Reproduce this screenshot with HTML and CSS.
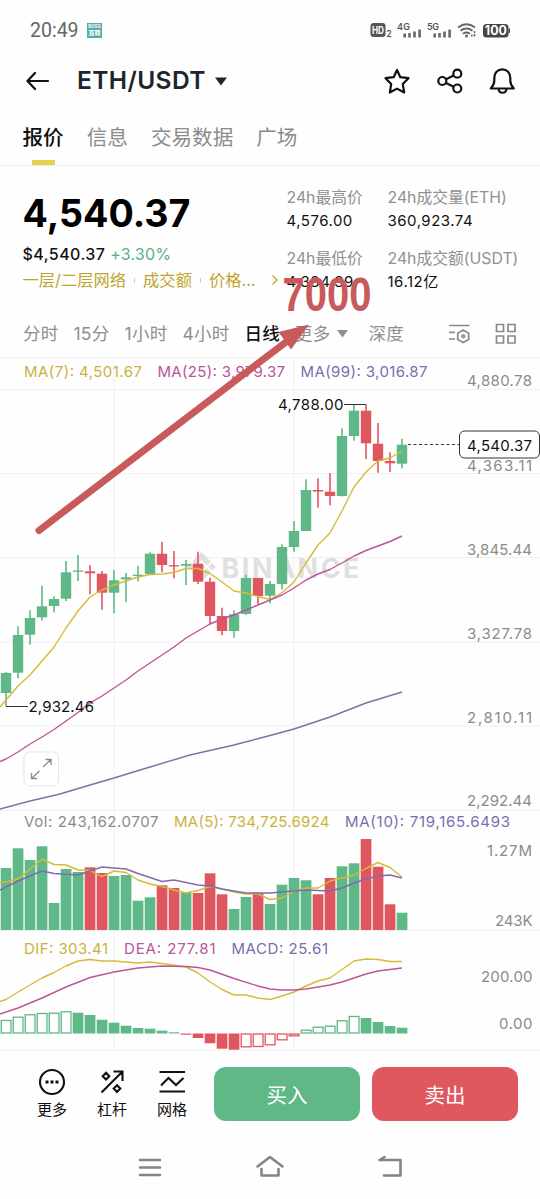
FILE: index.html
```html
<!DOCTYPE html>
<html lang="zh-CN">
<head>
    <meta charset="UTF-8">
    <meta name="viewport" content="width=device-width, initial-scale=1.0">
    <title>ETH/USDT</title>
    <link rel="stylesheet" href="styles.css">
</head>
<body>
    <div class="phone">
        <div class="status-bar">
            <span class="time">20:49</span>
            <span class="app-badge"><b>BOSS</b><b>直聘</b></span>
            <svg class="status-icons" width="144" height="24" viewBox="368 18 144 24">
                <rect x="370.5" y="23" width="15" height="14" rx="3" fill="#555"/>
                <text x="372" y="34" font-size="10.5" font-weight="700" fill="#fff" textLength="12" lengthAdjust="spacingAndGlyphs">HD</text>
                <text x="386.300" y="37" font-size="8.5" font-weight="600">2</text>
                <text x="397" y="30" font-size="9" font-weight="600" textLength="13">4G</text>
                <path d="M404.700 33.500v4M409.500 33v4.500M414.500 31.500v6M419.600 29.500v8" stroke="#666" stroke-width="2.600"/>
                <text x="427" y="30" font-size="9" font-weight="600" textLength="12">5G</text>
                <path d="M434.700 33.500v4M439.500 33v4.500M444.500 31.500v6M449.600 29.500v8" stroke="#666" stroke-width="2.600"/>
                <g fill="none" stroke="#666" stroke-width="1.900">
                    <path d="M458 27.500q8.500-6.500 17 0M460.500 30.800q6-4.500 12 0M463 33.800q3.500-2.500 7 0"/>
                    <path d="M474.500 31v2M474.500 34v2.500M471.800 34.500v2" stroke-width="1.500"/>
                </g>
                <circle cx="466.500" cy="36" r="1.500" fill="#666"/>
                <rect x="483" y="24" width="25.500" height="13.500" rx="3.500" fill="#444"/>
                <rect x="508.500" y="28.500" width="1.500" height="4.500" fill="#444"/>
                <text x="484.800" y="35.300" font-size="12.500" font-weight="700" fill="#fff" textLength="22" lengthAdjust="spacingAndGlyphs">100</text>
            </svg>
        </div>

        <div class="header">
            <svg class="back" width="24" height="22" viewBox="0 0 24 22"><path d="M9 3L1.500 11l7.500 8M1.500 11h20.500"/></svg>
            <h1>ETH/USDT</h1>
            <svg class="caret" width="14" height="9" viewBox="0 0 14 9"><path d="M1 .5h12L7 8.500z"/></svg>
            <div class="header-icons">
                <svg width="28" height="28" viewBox="0 0 28 28"><path d="M14 3l3.300 7.200 8.200 1-5.700 5.900 1.400 8.400L14 21.600l-7.200 3.900 1.400-8.400-5.700-5.900 8.200-1z"/></svg>
                <svg width="28" height="28" viewBox="0 0 28 28"><circle cx="6.300" cy="14" r="4"/><circle cx="21.300" cy="6.700" r="4"/><circle cx="21.300" cy="21.500" r="4"/><path d="M10 12.200l7.700-3.600M10 16l7.700 3.700"/></svg>
                <svg width="28" height="28" viewBox="0 0 28 28"><path d="M2.800 21.500h23c-2.200-2.200-3.500-4-3.500-8V11c0-5-3.200-8.700-8-8.700S6.300 6 6.300 11v2.500c0 4-1.300 5.800-3.500 8zM10.500 22c.5 5 7.500 5 8 0"/></svg>
            </div>
        </div>

        <div class="tabs">
            <span class="tab active">报价</span>
            <span class="tab">信息</span>
            <span class="tab">交易数据</span>
            <span class="tab">广场</span>
        </div>

        <div class="quote">
            <div class="quote-main">
                <div class="price">4,540.37</div>
                <div class="fiat">$4,540.37 <span class="change">+3.30%</span></div>
                <div class="tags">
                    <span>一层/二层网络</span><i></i><span>成交额</span><i></i><span>价格...</span>
                    <svg width="8" height="12" viewBox="0 0 8 12"><path d="M1.500 1.500L6 6l-4.500 4.500"/></svg>
                </div>
            </div>
            <div class="stats">
                <div class="stat"><label>24h最高价</label><b>4,576.00</b></div>
                <div class="stat"><label>24h成交量(ETH)</label><b>360,923.74</b></div>
                <div class="stat"><label>24h最低价</label><b>4,334.39</b></div>
                <div class="stat"><label>24h成交额(USDT)</label><b>16.12亿</b></div>
            </div>
        </div>

        <div class="periods">
            <span>分时</span>
            <span>15分</span>
            <span>1小时</span>
            <span>4小时</span>
            <span class="active">日线</span>
            <span class="more">更多 <svg width="11" height="8" viewBox="0 0 11 8"><path d="M0 0h11L5.500 7.500z"/></svg></span>
            <span class="depth">深度</span>
            <div class="period-icons">
                <svg width="24" height="22" viewBox="0 0 24 22"><path d="M2 2.500h20.500M2 9.300h6M2 16h6M16.200 7l5.500 3.200v6.200l-5.500 3.200-5.500-3.200v-6.200z"/><circle cx="16.200" cy="13.300" r="1.300"/></svg>
                <svg width="22" height="22" viewBox="0 0 22 22"><path d="M1.500 1.500h7v7h-7zM13 1.500h7v7h-7zM1.500 13h7v7h-7zM13 13h7v7h-7z"/></svg>
            </div>
        </div>

        <svg class="chart" id="main-chart" width="540" height="454" viewBox="0 357 540 454">
            <path class="grid" d="M0 357.500h540M0 389.500h540M0 473.500h540M0 557.500h540M0 642h540M0 726h540M0 810.500h540M114 357v454M294 357v454"/>
            <g class="watermark">
                <path d="M201.500 552l9.500 9.500-4 4-5.500-5.500-5.500 5.500-4-4zM191 563l3.800 3.800-3.800 3.800-3.800-3.800zM201.500 563l3.800 3.800-3.800 3.800-3.800-3.800zM212 563l3.800 3.800-3.800 3.800-3.800-3.800zM196 568l5.500 5.500 5.500-5.500 4 4-9.500 9.500-9.500-9.500z"/>
                <text x="221.500" y="578" textLength="138">BINANCE</text>
            </g>
            <g id="candles"></g>
            <g id="ma-lines"></g>
            <text class="yellow" x="24" y="377" textLength="118">MA(7): 4,501.67</text>
            <text class="pink" x="157.500" y="377" textLength="127.500">MA(25): 3,979.37</text>
            <text class="purple" x="300.500" y="377" textLength="127">MA(99): 3,016.87</text>
            <g class="axis">
                <text x="467" y="386" textLength="65">4,880.78</text>
                <text x="467" y="470.500" textLength="65">4,363.11</text>
                <text x="467" y="554.500" textLength="65">3,845.44</text>
                <text x="467" y="639" textLength="65">3,327.78</text>
                <text x="467" y="723" textLength="65">2,810.11</text>
                <text x="467" y="806" textLength="65">2,292.44</text>
            </g>
            <g class="marks">
                <path d="M344 404.500h22M6 706.500h22"/>
                <path d="M408 444.500h51" stroke-dasharray="3 2.500"/>
                <rect x="459.500" y="431" width="80" height="27" rx="5"/>
                <text x="278" y="410" textLength="65.500">4,788.00</text>
                <text x="28.500" y="712" textLength="65.500">2,932.46</text>
                <text x="467" y="451" textLength="65">4,540.37</text>
            </g>
            <g class="expand">
                <rect x="24" y="752" width="34.500" height="34" rx="6"/>
                <path d="M43 767l8-7.500M45.500 759.500H51v5.500M39.500 771l-8 7.500M37 778.500h-5.500V773"/>
            </g>
        </svg>

        <svg class="chart" id="vol-chart" width="540" height="120" viewBox="0 811 540 120">
            <path class="grid" d="M0 930.500h540M114 811v120M294 811v120"/>
            <g id="vol-bars"></g>
            <text class="gray" x="24" y="827" textLength="134.500">Vol: 243,162.0707</text>
            <text class="yellow" x="174" y="827" textLength="155.500">MA(5): 734,725.6924</text>
            <text class="purple" x="345" y="827" textLength="165">MA(10): 719,165.6493</text>
            <g class="axis">
                <text x="487" y="855.500" textLength="45">1.27M</text>
                <text x="495" y="926" textLength="37.500">243K</text>
            </g>
        </svg>

        <svg class="chart" id="macd-chart" width="540" height="120" viewBox="0 931 540 120">
            <path class="grid" d="M0 1050h540M114 931v120M294 931v120"/>
            <g id="macd-bars"></g>
            <text class="yellow" x="24" y="954" textLength="84">DIF: 303.41</text>
            <text class="pink" x="124" y="954" textLength="91.500">DEA: 277.81</text>
            <text class="purple" x="231.500" y="954" textLength="96.500">MACD: 25.61</text>
            <g class="axis">
                <text x="481" y="982" textLength="51.500">200.00</text>
                <text x="499" y="1029" textLength="33.500">0.00</text>
            </g>
        </svg>

        <div class="actions">
            <div class="action">
                <svg width="28" height="28" viewBox="0 0 28 28"><circle cx="14" cy="14" r="12"/><path d="M7.500 14h3M12.500 14h3M17.500 14h3" stroke-width="3"/></svg>
                <span>更多</span>
            </div>
            <div class="action">
                <svg width="28" height="28" viewBox="0 0 28 28"><path d="M3.500 24.500L24.500 3.500M15.500 3.500h9v9.500M8 4.800l3.300 3.400L8 11.600 4.700 8.200zM19 17.200l3.300 3.400-3.300 3.400-3.300-3.400z"/></svg>
                <span>杠杆</span>
            </div>
            <div class="action">
                <svg width="28" height="28" viewBox="0 0 28 28"><path d="M1.500 4h25.500M1.500 23.500h25.500M3 17.500l7.500-7.500 7.500 7 7.500-7"/></svg>
                <span>网格</span>
            </div>
            <button class="buy">买入</button>
            <button class="sell">卖出</button>
        </div>

        <div class="nav-bar">
            <svg width="30" height="26" viewBox="0 0 30 26"><path d="M5 5h20M5 12.500h20M5 20h20"/></svg>
            <svg width="30" height="26" viewBox="0 0 30 26"><path d="M2.500 11.500L15 2l12.500 9.500M6.500 14v6.500h17V14"/></svg>
            <svg width="30" height="26" viewBox="0 0 30 26"><path d="M9.500 2l-5 3H25.500v15.500H9"/></svg>
        </div>

        <!-- hand drawn target on top of the page -->
        <svg class="note" width="380" height="300" viewBox="20 245 380 300">
            <path d="M39 530.500L290 339" fill="none" stroke="#c95a5c" stroke-width="7" stroke-linecap="round"/>
            <path d="M309 324.500L278.500 332 291 349.500z" fill="#c95a5c"/>
            <text x="282.500" y="310.500" textLength="89" lengthAdjust="spacingAndGlyphs">7000</text>
        </svg>
    </div>

    <script>
        const GREEN = '#5fb887';
        const RED = '#e0565f';
        const STEP = 12;
        const HALF = 5.2;

        // [body top, body bottom, wick top, wick bottom, up]
        const candles = [
            [673, 693, 672, 706, 1], [635, 672.7, 626.3, 678.3, 1], [618, 634.7, 610.3, 644.7, 1],
            [606.3, 617.3, 585.7, 620.3, 1], [599, 606, 596.3, 612.3, 1], [572.3, 598.7, 561, 601, 1],
            [570.5, 571.8, 555, 581, 1], [571.3, 573.3, 565.3, 594.3, 0], [573.7, 592.7, 571, 609.7, 0],
            [580.3, 592.7, 570, 613.3, 1], [577.3, 579.3, 573, 602, 1], [574.7, 576, 566, 581.3, 1],
            [553.7, 574, 552.3, 574, 1], [553.7, 565, 542, 572.3, 0], [565.2, 566.5, 551, 578.3, 0],
            [564, 565.7, 560, 585, 1], [563.7, 581.7, 551.7, 584, 0], [581.7, 616, 577.7, 624, 0],
            [616, 631, 607.7, 635.3, 0], [614.3, 631, 610.3, 637.7, 1], [578, 614, 574.7, 615, 1],
            [578, 596, 578, 604.3, 0], [584, 595.7, 581, 603.3, 1], [547, 584, 544.3, 589.7, 1],
            [531, 547, 521, 551.7, 1], [490, 531, 479.3, 531, 1], [490, 491.5, 478.3, 507.7, 0],
            [491.7, 496, 473, 505.3, 0], [436, 496, 428.3, 496.5, 1], [410.7, 436, 404.7, 440.7, 1],
            [410.7, 443.3, 404.7, 459, 0], [443.7, 461, 423, 472.7, 0], [461, 463.3, 452.3, 472, 0],
            [444.7, 463.7, 438.7, 468.3, 1]
        ];

        const volumes = [868, 848.3, 860, 846.3, 903, 869, 872, 867.3, 873, 876, 875, 900.7, 897.3, 885.3, 888, 892.3, 893,
            873.3, 894.3, 909, 897, 893.3, 904, 884.7, 878, 880.3, 894.3, 878, 866.3, 863.3, 839, 866.7, 904.3, 912.7];

        const macd = [1020, 1016.7, 1014.3, 1013, 1012.7, 1011.3, 1012.7, 1015, 1019.7, 1022.7, 1025.7, 1028, 1028.7, 1030.7,
            1032.3, 1034.7, 1038, 1043.3, 1048.7, 1049.7, 1047.3, 1047, 1045.3, 1040.3, 1036.3, 1029.7, 1026.7, 1025.7,
            1020.3, 1016, 1018, 1022, 1026, 1027.7];
        const ZERO = 1033.5;

        function rect(x, y, w, h, fill, stroke) {
            return `<rect x="${x}" y="${y}" width="${w}" height="${Math.max(h, 0.1)}" fill="${fill}"` +
                (stroke ? ` stroke="${stroke}" stroke-width="1.3"` : '') + '/>';
        }

        function line(points, color) {
            return `<polyline points="${points}" fill="none" stroke="${color}" stroke-width="1.4" stroke-linejoin="round"/>`;
        }

        let html = '';
        candles.forEach(([top, bottom, high, low, up], i) => {
            const x = 6 + i * STEP;
            const color = up ? GREEN : RED;
            html += rect(x - 0.8, high, 1.6, low - high, color);
            html += rect(x - HALF, top, HALF * 2, bottom - top, color);
        });
        document.getElementById('candles').innerHTML = html;

        document.getElementById('ma-lines').innerHTML =
            line('0,809 30,801 60,794 90,785 114,778 150,767 190,755 234,745 270,735.5 294,729 330,717 366,703 402,692', '#7b72a8') +
            line('0,707 6,700 18,686 30,675 42,661 54,647 66,628 78,611 90,597 102,590 114,585 126,581 138,577 150,574.5 162,574 174,572.5 186,568.5 198,568.5 210,573.5 222,582 234,591 246,593 258,596.5 270,599.5 283,592 294,582 306,563 318,545 330,533 342,511 354,487 366,472 378,461 390,458 402,451', '#d6bb38') +
            line('0,761.5 6,759 18,752 30,744 42,737 54,729.5 66,721 78,712.5 90,703 102,696 114,688 126,680 138,671 150,663 162,655 174,647 186,638 198,631 210,624 222,619 234,615 246,610 258,605 270,600 282,595 294,588 306,580 318,574 330,569.5 342,563 354,556 366,550.5 378,546 390,541.5 402,536', '#bd559b');

        html = '';
        volumes.forEach((top, i) => {
            html += rect(0.7 + i * STEP, top, 10.7, 930 - top, candles[i][4] ? GREEN : RED);
        });
        html += line('0,882 6,882 18,879 30,869 42,859 54,864.5 66,865 78,870 90,870.5 102,876.5 114,871 126,872.5 138,880 150,884 162,886.5 174,890 186,893 198,890.5 210,886.5 222,889 234,892 246,894 258,894 270,899.5 282,898 294,891.5 306,888 318,888 330,881 342,878 354,875 366,868.5 378,862.5 390,867.5 402,877', '#d6bb38');
        html += line('0,890 18,881 42,871 54,873.5 78,875 90,871 102,867 126,869 138,873.5 162,881.5 174,880 198,885 210,886 222,889 246,893 270,893 294,891 306,890 330,891 342,888 354,883 366,879 378,876 390,875 402,878', '#7f6bb0');
        document.getElementById('vol-bars').innerHTML = html;

        html = '';
        macd.forEach((y, i) => {
            const color = y < ZERO ? GREEN : RED;
            const top = Math.min(y, ZERO);
            const h = Math.abs(y - ZERO);
            const hollow = i < 6 || (i > 19 && i < 30);
            html += hollow
                ? rect(1.2 + i * STEP, top + 0.5, 9.8, h - 1, '#fff', color)
                : rect(0.7 + i * STEP, top, 10.7, h, color);
        });
        html += line('0,1001.5 6,999.5 18,992 30,985 42,978 54,972.5 66,966 78,961 90,959.5 102,961 114,961 138,963 150,962 162,963.5 186,967 198,973 210,982 222,989.5 234,995 246,995 258,998 270,999.5 282,996 294,992 306,986 318,981 330,978 342,969.5 354,961 366,959 378,959.5 390,961.5 402,961.5', '#d6bb38');
        html += line('0,1014 18,1008 42,998 66,987 90,977.5 114,972 138,968 162,966 186,966.5 198,967.5 210,970 234,978.5 258,986 270,989 282,990 294,990 306,989 330,985 342,982 366,974 378,971 402,968', '#bd559b');
        document.getElementById('macd-bars').innerHTML = html;
    </script>
</body>
</html>
```
FILE: styles.css
```css
* {
    box-sizing: border-box;
}
body {
    margin: 0;
    background: #fefefe;
    color: #111;
    font-family: Inter, 'Noto Sans CJK SC', sans-serif;
}
svg {
    display: block;
    flex: none;
}
.phone {
    position: relative;
    width: 540px;
    height: 1199px;
    overflow: hidden;
    display: flex;
    flex-direction: column;
    white-space: nowrap;
}
.status-bar {
    height: 60px;
    padding: 0 28px 0 30px;
    display: flex;
    align-items: center;
}
.time {
    font-family: Roboto, sans-serif;
    font-size: 19.5px;
    color: #666;
    width: 57px;
}
.app-badge {
    width: 15px;
    height: 15px;
    background: #58aaa9;
    color: #fff;
    display: flex;
    flex-direction: column;
    align-items: center;
    justify-content: center;
}
.app-badge b {
    font-size: 4.5px;
    line-height: 5px;
}
.app-badge b + b {
    font-size: 6px;
    line-height: 7px;
}
.status-icons {
    margin-left: auto;
    fill: #555;
}
.header {
    height: 42px;
    padding: 0 24px 0 26px;
    display: flex;
    align-items: center;
}
.back {
    fill: none;
    stroke: #111;
    stroke-width: 2.2;
    stroke-linecap: round;
}
.header h1 {
    margin: 0 9px 2px 27px;
    width: 128px;
    font-size: 24.5px;
    font-weight: 600;
    letter-spacing: 0.4px;
    color: #20242b;
}
.caret {
    fill: #20242b;
}
.header-icons {
    margin-left: auto;
    display: flex;
    gap: 24.5px;
    fill: none;
    stroke: #111;
    stroke-width: 2.2;
    stroke-linejoin: round;
}
.tabs {
    height: 64px;
    padding-left: 22.5px;
    display: flex;
    gap: 23px;
    border-bottom: 1px solid #ededed;
}
.tab {
    position: relative;
    font-size: 20.6px;
    line-height: 72px;
    color: #8b8b8b;
}
.tab.active {
    color: #111;
    font-weight: 500;
}
.tab.active::after {
    content: '';
    position: absolute;
    left: 9px;
    bottom: 0;
    width: 23px;
    height: 5px;
    background: #e8cf50;
}
.quote {
    height: 146px;
    padding-left: 22.5px;
    display: flex;
}
.quote-main {
    width: 264px;
    padding-top: 20px;
}
.price {
    font-size: 37.6px;
    line-height: 55px;
    font-weight: 700;
    color: #000;
}
.fiat {
    font-size: 16px;
    line-height: 26px;
    font-weight: 500;
    letter-spacing: 0.45px;
}
.change {
    color: #58b086;
    font-weight: 400;
    letter-spacing: 0.2px;
}
.tags {
    display: flex;
    align-items: center;
    font-size: 16.3px;
    line-height: 26px;
    color: #bfa42c;
}
.tags i {
    width: 1px;
    height: 5px;
    margin: 0 8px;
    background: #ccc;
}
.tags svg {
    margin-left: 15px;
    fill: none;
    stroke: #c9b443;
    stroke-width: 1.6;
}
.stats {
    padding-top: 20px;
    display: grid;
    grid-template-columns: 101px 150px;
    grid-template-rows: 61px 61px;
}
.stat label {
    display: block;
    font-size: 15.8px;
    line-height: 23px;
    color: #8f9094;
}
.stat b {
    display: block;
    font-size: 15px;
    line-height: 24px;
    font-weight: 400;
    letter-spacing: 0.5px;
    color: #111;
}
.periods {
    height: 45px;
    padding: 0 23px 0 23px;
    display: flex;
    align-items: center;
    gap: 15px;
    font-size: 17.5px;
    line-height: 22px;
    letter-spacing: 0.25px;
    padding-bottom: 2px;
    color: #8f8f8f;
}
.periods .active {
    color: #111;
    font-weight: 500;
}
.more {
    display: flex;
    align-items: center;
    gap: 7px;
}
.more svg {
    fill: #8f8f8f;
}
.depth {
    margin-left: 5px;
}
.period-icons {
    margin-left: auto;
    display: flex;
    gap: 24px;
    fill: none;
    stroke: #8a8a8a;
    stroke-width: 1.7;
}
.chart {
    font-size: 15px;
}
.grid {
    fill: none;
    stroke: #f0f0f0;
    stroke-width: 1;
}
.watermark {
    fill: #e0e0e0;
    font-size: 27px;
    font-weight: 700;
}
.yellow {
    fill: #cbb23c;
}
.pink {
    fill: #b9549b;
}
.purple {
    fill: #7c6cae;
}
.gray,
.axis {
    fill: #8b8b8b;
}
.marks text {
    fill: #111;
}
.marks path {
    fill: none;
    stroke: #333;
}
.marks rect {
    fill: #fff;
    stroke: #333;
}
.expand rect {
    fill: #fff;
    stroke: #e5e5e5;
}
.expand path {
    fill: none;
    stroke: #8a8a8a;
    stroke-width: 1.3;
}
.actions {
    height: 86px;
    padding: 0 22px;
    display: flex;
    align-items: center;
}
.action {
    width: 60px;
    padding-top: 3px;
    display: flex;
    flex-direction: column;
    align-items: center;
    font-size: 15px;
    line-height: 27px;
    color: #111;
}
.action svg {
    fill: none;
    stroke: #111;
    stroke-width: 2.1;
}
.actions button {
    width: 146px;
    height: 54px;
    margin-left: 12px;
    border: none;
    border-radius: 12px;
    color: #fff;
    font: 20.5px 'Noto Sans CJK SC', sans-serif;
}
.actions .buy {
    background: #5fb885;
}
.actions .sell {
    background: #e0585f;
}
.nav-bar {
    height: 62px;
    display: flex;
    align-items: center;
    justify-content: center;
    gap: 90px;
    fill: none;
    stroke: #848484;
    stroke-width: 2.6;
    stroke-linecap: round;
    stroke-linejoin: round;
}
.note {
    position: absolute;
    left: 20px;
    top: 245px;
    fill: #c95a5c;
    font: bold 48px 'Liberation Sans', sans-serif;
}
```
